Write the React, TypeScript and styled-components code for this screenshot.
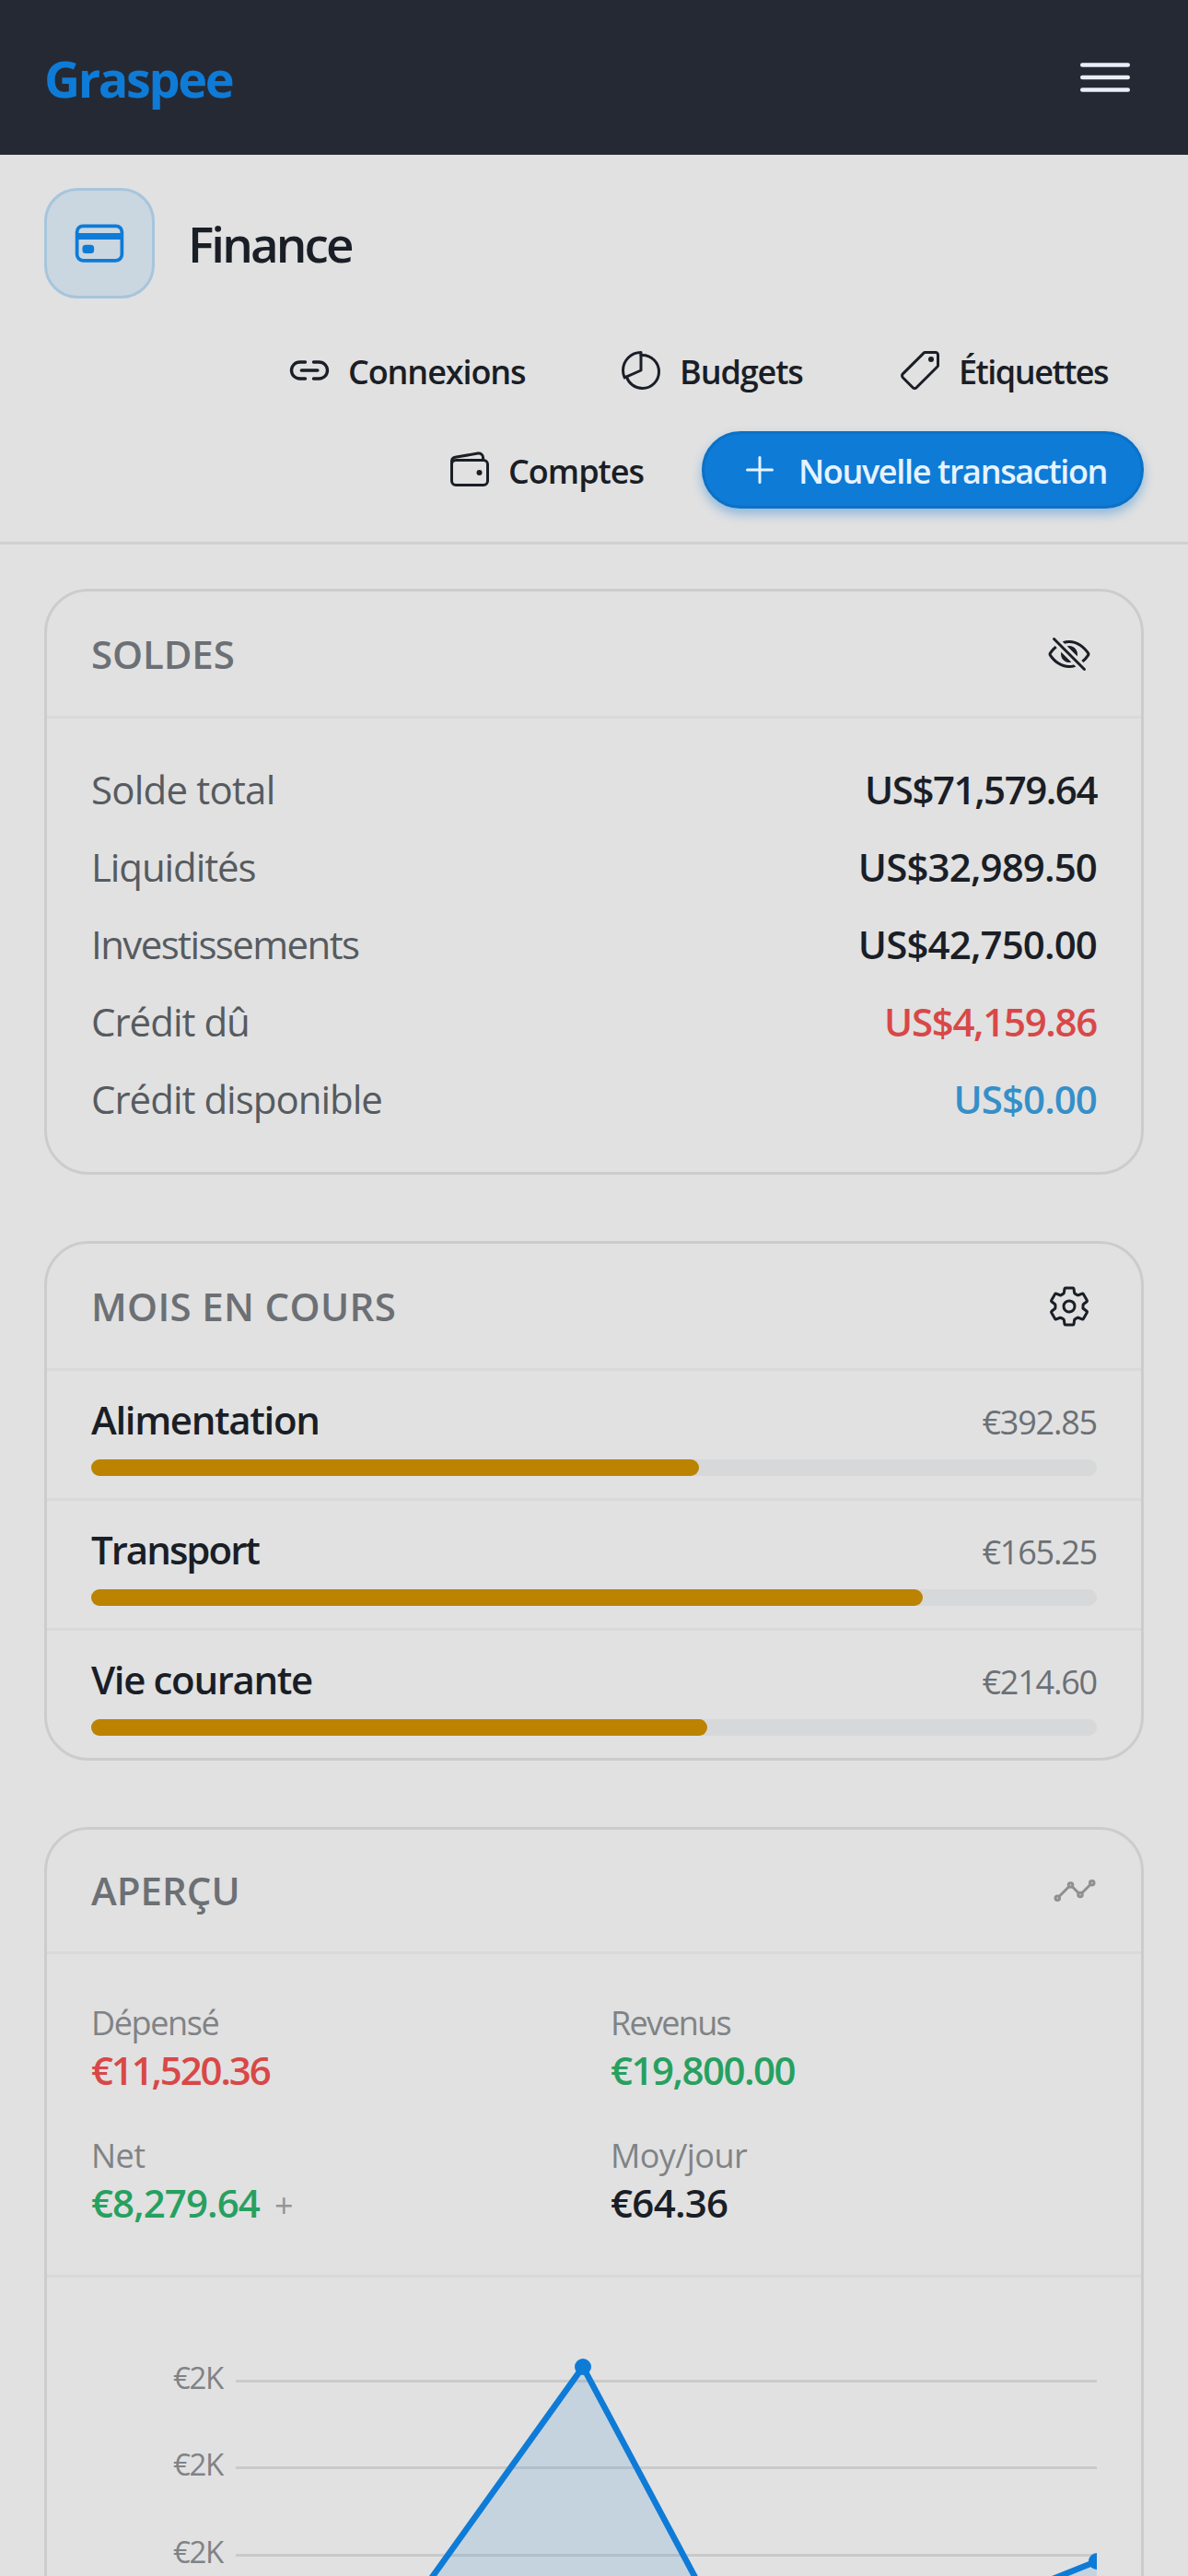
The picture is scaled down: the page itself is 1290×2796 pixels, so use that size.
import React from "react";
import styled, { createGlobalStyle } from "styled-components";
import {
  IoAddOutline,
  IoAnalyticsOutline,
  IoCardOutline,
  IoEyeOffOutline,
  IoLinkOutline,
  IoMenuOutline,
  IoPieChartOutline,
  IoPricetagOutline,
  IoSettingsOutline,
  IoWalletOutline,
} from "react-icons/io5";

const color = {
  page: "#e1e1e1",
  nav: "#252933",
  primary: "#0e7bd7",
  ink: "#1a1e26",
  body: "#565b60",
  muted: "#6c7075",
  faint: "#808386",
  line: "#cbcccc",
  lineSoft: "#d9d9da",
  track: "#d6d8d9",
  amber: "#bb8300",
  red: "#d84848",
  green: "#27a060",
  sky: "#358fc8",
};

const GlobalStyle = createGlobalStyle`
  * { box-sizing: border-box; }
  body {
    margin: 0;
    background: ${color.page};
    color: ${color.ink};
    font-family: "Open Sans", "Noto Sans", sans-serif;
  }
  svg { display: block; flex: none; }
`;

const Page = styled.div`
  display: flex;
  flex-direction: column;
  height: 2796px;
  overflow: hidden;
`;

const NavBar = styled.nav`
  display: flex;
  flex: none;
  align-items: center;
  justify-content: space-between;
  height: 168px;
  padding: 0 54px 0 48px;
  background: ${color.nav};
  color: #e9eefb;
`;

const Brand = styled.span`
  padding-top: 2px;
  color: ${color.primary};
  font-size: 54px;
  font-weight: 700;
  line-height: 72px;
  letter-spacing: -2.4px;
`;

const PageHeader = styled.header`
  display: flex;
  flex: none;
  flex-direction: column;
  gap: 36px;
  padding: 36px 48px;
  border-bottom: 3px solid #cfd0d0;
`;

const TitleRow = styled.div`
  display: flex;
  align-items: center;
  gap: 36px;
`;

const TitleIcon = styled.div`
  display: grid;
  place-items: center;
  width: 120px;
  height: 120px;
  border: 3px solid #a7c5dc;
  border-radius: 36px;
  background: #cad6e0;
  color: ${color.primary};
`;

const Title = styled.h1`
  margin: 0;
  padding-top: 2px;
  font-size: 53px;
  font-weight: 600;
  line-height: 72px;
  letter-spacing: -2.9px;
`;

const Actions = styled.div`
  display: flex;
  flex-wrap: wrap;
  justify-content: flex-end;
  gap: 24px;
`;

const ActionButton = styled.button<{ $primary?: boolean; $width: number }>`
  display: flex;
  align-items: center;
  gap: 18px;
  width: ${(p) => p.$width}px;
  height: 84px;
  padding: 0 0 0 36px;
  border: 3px solid ${(p) => (p.$primary ? "#0c71c6" : "transparent")};
  border-radius: 42px;
  background: ${(p) => (p.$primary ? color.primary : "transparent")};
  color: ${(p) => (p.$primary ? "#e6f3ff" : color.ink)};
  box-shadow: ${(p) => (p.$primary ? "0 6px 12px rgba(14, 123, 215, 0.4)" : "none")};
  font: 600 36px/48px "Open Sans", "Noto Sans", sans-serif;
  white-space: nowrap;
`;

const ActionLabel = styled.span<{ $spacing: number }>`
  padding-top: 4px;
  letter-spacing: ${(p) => p.$spacing}px;
`;

const Content = styled.main`
  display: flex;
  flex: none;
  flex-direction: column;
  gap: 72px;
  padding: 48px;
`;

const Card = styled.section`
  border: 3px solid ${color.line};
  border-radius: 48px;
`;

const CardHeader = styled.div<{ $height: number; $inset?: number }>`
  display: flex;
  align-items: center;
  justify-content: space-between;
  height: ${(p) => p.$height}px;
  padding: 0 ${(p) => 48 + (p.$inset ?? 0)}px 0 48px;
  border-bottom: 3px solid ${color.lineSoft};
`;

const CardTitle = styled.h2<{ $spacing: number }>`
  margin: 0;
  color: ${color.muted};
  font-size: 42px;
  font-weight: 600;
  line-height: 60px;
  letter-spacing: ${(p) => p.$spacing}px;
`;

const FaintIcon = styled.span`
  color: #8e9092;
`;

const BalanceList = styled.dl`
  margin: 0;
  padding: 36px 48px;
`;

const BalanceRow = styled.div`
  display: flex;
  align-items: center;
  justify-content: space-between;
  height: 84px;
  padding-bottom: 3px;
  font-size: 42px;
`;

const BalanceLabel = styled.dt<{ $spacing: number }>`
  color: ${color.body};
  letter-spacing: ${(p) => p.$spacing}px;
`;

const BalanceValue = styled.dd<{ $color?: string; $spacing: number }>`
  margin: 0;
  color: ${(p) => p.$color ?? color.ink};
  font-weight: 600;
  letter-spacing: ${(p) => p.$spacing}px;
`;

const BudgetItem = styled.div`
  padding: 24px 48px;
  & + & {
    border-top: 3px solid ${color.lineSoft};
  }
`;

const BudgetLine = styled.div`
  display: flex;
  align-items: baseline;
  justify-content: space-between;
  height: 60px;
  margin-bottom: 12px;
  line-height: 58px;
`;

const BudgetName = styled.span<{ $spacing: number }>`
  font-size: 42px;
  font-weight: 600;
  letter-spacing: ${(p) => p.$spacing}px;
`;

const BudgetAmount = styled.span`
  color: ${color.muted};
  font-size: 36px;
  letter-spacing: -1.2px;
`;

const Track = styled.div`
  height: 18px;
  border-radius: 9px;
  background: ${color.track};
`;

const Fill = styled.div<{ $percent: number }>`
  width: ${(p) => p.$percent}%;
  height: 100%;
  border-radius: 9px;
  background: ${color.amber};
`;

const StatGrid = styled.div`
  display: grid;
  grid-template-columns: 1fr 1fr;
  gap: 36px;
  padding: 48px;
  border-bottom: 3px solid ${color.lineSoft};
`;

const Stat = styled.div`
  height: 108px;
`;

const StatLabel = styled.div<{ $spacing: number }>`
  color: ${color.faint};
  font-size: 36px;
  line-height: 53px;
  letter-spacing: ${(p) => p.$spacing}px;
`;

const StatValue = styled.div<{ $color?: string; $spacing: number }>`
  display: flex;
  align-items: baseline;
  gap: 16px;
  color: ${(p) => p.$color ?? color.ink};
  font-size: 42px;
  font-weight: 600;
  line-height: 50px;
  letter-spacing: ${(p) => p.$spacing}px;
`;

const StatNote = styled.small`
  color: #939597;
  font-size: 36px;
  font-weight: 400;
`;

const ChartArea = styled.div`
  padding: 48px;
`;

const AxisLabel = styled.text`
  fill: ${color.faint};
  font-size: 33px;
  letter-spacing: -1.3px;
`;

const actions = [
  { label: "Connexions", icon: IoLinkOutline, width: 336, spacing: -1.1 },
  { label: "Budgets", icon: IoPieChartOutline, width: 279, spacing: -1.1 },
  { label: "Étiquettes", icon: IoPricetagOutline, width: 306, spacing: -1.5 },
  { label: "Comptes", icon: IoWalletOutline, width: 291, spacing: -1 },
  { label: "Nouvelle transaction", icon: IoAddOutline, width: 480, spacing: -1.35, primary: true },
];

const balances = [
  { label: "Solde total", labelSpacing: -0.8, value: "US$71,579.64", valueSpacing: -1.45 },
  { label: "Liquidités", labelSpacing: -1.1, value: "US$32,989.50", valueSpacing: -0.85 },
  { label: "Investissements", labelSpacing: -1.6, value: "US$42,750.00", valueSpacing: -0.85 },
  { label: "Crédit dû", labelSpacing: -1, value: "US$4,159.86", valueSpacing: -1.3, color: color.red },
  { label: "Crédit disponible", labelSpacing: -1, value: "US$0.00", valueSpacing: -0.9, color: color.sky },
];

const budgets = [
  { name: "Alimentation", spacing: -1.35, amount: "€392.85", percent: 60.4 },
  { name: "Transport", spacing: -2, amount: "€165.25", percent: 82.7 },
  { name: "Vie courante", spacing: -1.35, amount: "€214.60", percent: 61.3 },
];

const stats = [
  { label: "Dépensé", labelSpacing: -1.4, value: "€11,520.36", valueSpacing: -2.15, color: color.red },
  { label: "Revenus", labelSpacing: -1.7, value: "€19,800.00", valueSpacing: -1.5, color: color.green },
  { label: "Net", labelSpacing: -0.5, value: "€8,279.64", valueSpacing: -0.9, color: color.green, note: "+" },
  { label: "Moy/jour", labelSpacing: -0.6, value: "€64.36", valueSpacing: -0.7 },
];

const gridLines = [64.5, 158.5, 253.5];

function SpendingChart() {
  return (
    <svg width="1092" height="600" viewBox="0 0 1092 600">
      {gridLines.map((y) => (
        <g key={y}>
          <AxisLabel x={143} y={y + 8.5} textAnchor="end">
            €2K
          </AxisLabel>
          <line x1={157} x2={1092} y1={y} y2={y} stroke="#c9caca" strokeWidth={3} />
        </g>
      ))}
      <path d="M318.7 349L534 49L694 349Z" fill={color.primary} fillOpacity={0.13} />
      <path d="M869.5 349L1092 260V349Z" fill={color.primary} fillOpacity={0.13} />
      <path
        d="M318.7 349L534 49L694 349M869.5 349L1092 260"
        fill="none"
        stroke={color.primary}
        strokeWidth={6.6}
        strokeLinejoin="round"
      />
      <circle cx={534} cy={49} r={9} fill={color.primary} />
      <circle cx={1092} cy={260} r={9} fill={color.primary} />
    </svg>
  );
}

export default function App() {
  return (
    <Page>
      <GlobalStyle />
      <NavBar>
        <Brand>Graspee</Brand>
        <IoMenuOutline size={72} />
      </NavBar>

      <PageHeader>
        <TitleRow>
          <TitleIcon>
            <IoCardOutline size={60} />
          </TitleIcon>
          <Title>Finance</Title>
        </TitleRow>
        <Actions>
          {actions.map(({ label, icon: Icon, width, spacing, primary }) => (
            <ActionButton key={label} $width={width} $primary={primary}>
              <Icon size={48} />
              <ActionLabel $spacing={spacing}>{label}</ActionLabel>
            </ActionButton>
          ))}
        </Actions>
      </PageHeader>

      <Content>
        <Card>
          <CardHeader $height={138} $inset={6}>
            <CardTitle $spacing={-0.1}>SOLDES</CardTitle>
            <IoEyeOffOutline size={48} />
          </CardHeader>
          <BalanceList>
            {balances.map((row) => (
              <BalanceRow key={row.label}>
                <BalanceLabel $spacing={row.labelSpacing}>{row.label}</BalanceLabel>
                <BalanceValue $color={row.color} $spacing={row.valueSpacing}>
                  {row.value}
                </BalanceValue>
              </BalanceRow>
            ))}
          </BalanceList>
        </Card>

        <Card>
          <CardHeader $height={138} $inset={6}>
            <CardTitle $spacing={0.35}>MOIS EN COURS</CardTitle>
            <IoSettingsOutline size={48} />
          </CardHeader>
          {budgets.map((b) => (
            <BudgetItem key={b.name}>
              <BudgetLine>
                <BudgetName $spacing={b.spacing}>{b.name}</BudgetName>
                <BudgetAmount>{b.amount}</BudgetAmount>
              </BudgetLine>
              <Track>
                <Fill $percent={b.percent} />
              </Track>
            </BudgetItem>
          ))}
        </Card>

        <Card>
          <CardHeader $height={135}>
            <CardTitle $spacing={0}>APERÇU</CardTitle>
            <FaintIcon>
              <IoAnalyticsOutline size={48} />
            </FaintIcon>
          </CardHeader>
          <StatGrid>
            {stats.map((s) => (
              <Stat key={s.label}>
                <StatLabel $spacing={s.labelSpacing}>{s.label}</StatLabel>
                <StatValue $color={s.color} $spacing={s.valueSpacing}>
                  {s.value}
                  {s.note && <StatNote>{s.note}</StatNote>}
                </StatValue>
              </Stat>
            ))}
          </StatGrid>
          <ChartArea>
            <SpendingChart />
          </ChartArea>
        </Card>
      </Content>
    </Page>
  );
}
